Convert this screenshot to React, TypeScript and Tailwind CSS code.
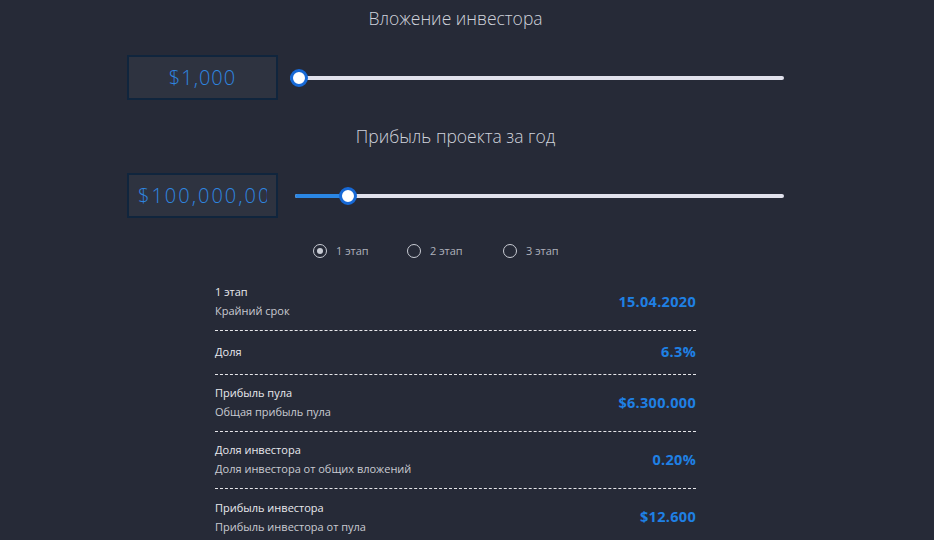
import { useState } from "react";

const rows = [
  { title: "1 этап", sub: "Крайний срок", value: "15.04.2020" },
  { title: "Доля", sub: "", value: "6.3%" },
  { title: "Прибыль пула", sub: "Общая прибыль пула", value: "$6.300.000" },
  { title: "Доля инвестора", sub: "Доля инвестора от общих вложений", value: "0.20%" },
  { title: "Прибыль инвестора", sub: "Прибыль инвестора от пула", value: "$12.600" },
];

function Slider({ percent }: { percent: number }) {
  return (
    <div className="relative flex-1 h-[18px] flex items-center">
      <div className="h-[4px] w-full rounded-full bg-[#e1e1ec]" />
      <div
        className="absolute left-0 h-[4px] rounded-full bg-[#2a86e4]"
        style={{ width: `calc(${percent}% + 9px)` }}
      />
      <div
        className="absolute top-0 h-[18px] w-[18px] -translate-x-1/2 rounded-full border-[3px] border-[#1769d6] bg-white"
        style={{ left: `calc(${percent}% + 9px)` }}
      />
    </div>
  );
}

export default function App() {
  const [stage, setStage] = useState(1);
  const widths = ["w-[94px]", "w-[96px]", "w-[96px]"];

  return (
    <div
      className="min-h-screen w-full bg-[#262a37] text-[#d4d6de]"
      style={{ fontFamily: '"Open Sans", "Noto Sans", sans-serif' }}
    >
      <div className="ml-[127px] w-[657px] pt-[6px]">
        <h2 className="text-center text-[17.5px] font-light leading-[24px] text-[#d0d3dc]">
          Вложение инвестора
        </h2>
        <div className="mt-[25px] flex items-center gap-[12px]">
          <div className="flex h-[45px] w-[151px] shrink-0 items-center justify-center overflow-hidden border-2 border-[#10253d] bg-[#2e3340] text-[20px] font-light tracking-[1px] text-[#2e86e0]">
            $1,000
          </div>
          <Slider percent={0} />
        </div>

        <h2 className="mt-[24px] text-center text-[17.5px] font-light leading-[24px] text-[#d0d3dc]">
          Прибыль проекта за год
        </h2>
        <div className="mt-[25px] flex items-center gap-[17px]">
          <div className="flex h-[45px] w-[151px] shrink-0 items-center border-2 border-[#10253d] bg-[#2e3340] px-[9px]">
            <div className="w-full overflow-hidden whitespace-nowrap text-[20px] font-light tracking-[2px] text-[#2e86e0]">
              $100,000,000
            </div>
          </div>
          <Slider percent={9} />
        </div>

        <div className="mt-[25px] ml-[186px] flex items-center text-[11px] text-[#aeb1bb]">
          {[1, 2, 3].map((n, i) => (
            <button
              key={n}
              onClick={() => setStage(n)}
              className={`${widths[i]} flex items-center gap-[9px]`}
            >
              <span className="flex h-[14px] w-[14px] items-center justify-center rounded-full border border-[#c9ccd4]">
                {stage === n && <span className="h-[6px] w-[6px] rounded-full bg-[#c9ccd4]" />}
              </span>
              <span>{n} этап</span>
            </button>
          ))}
        </div>

        <div className="mx-auto mt-[14px] w-[481px]">
          {rows.map((r, i) => (
            <div
              key={r.title}
              className={`flex items-center justify-between ${
                i < rows.length - 1 ? "border-b border-dashed border-[#e6e6ea]" : ""
              } ${r.sub ? "h-[57px]" : "h-[44px]"}`}
            >
              <div className="flex flex-col gap-[3px] text-[11px] leading-[16px]">
                <span className="font-medium text-[#e8e9ee]">{r.title}</span>
                {r.sub && <span className="text-[#c9cbd2]">{r.sub}</span>}
              </div>
              <span className="text-[14.5px] font-bold tracking-[0.3px] text-[#1f80e4]">
                {r.value}
              </span>
            </div>
          ))}
        </div>
      </div>
    </div>
  );
}
